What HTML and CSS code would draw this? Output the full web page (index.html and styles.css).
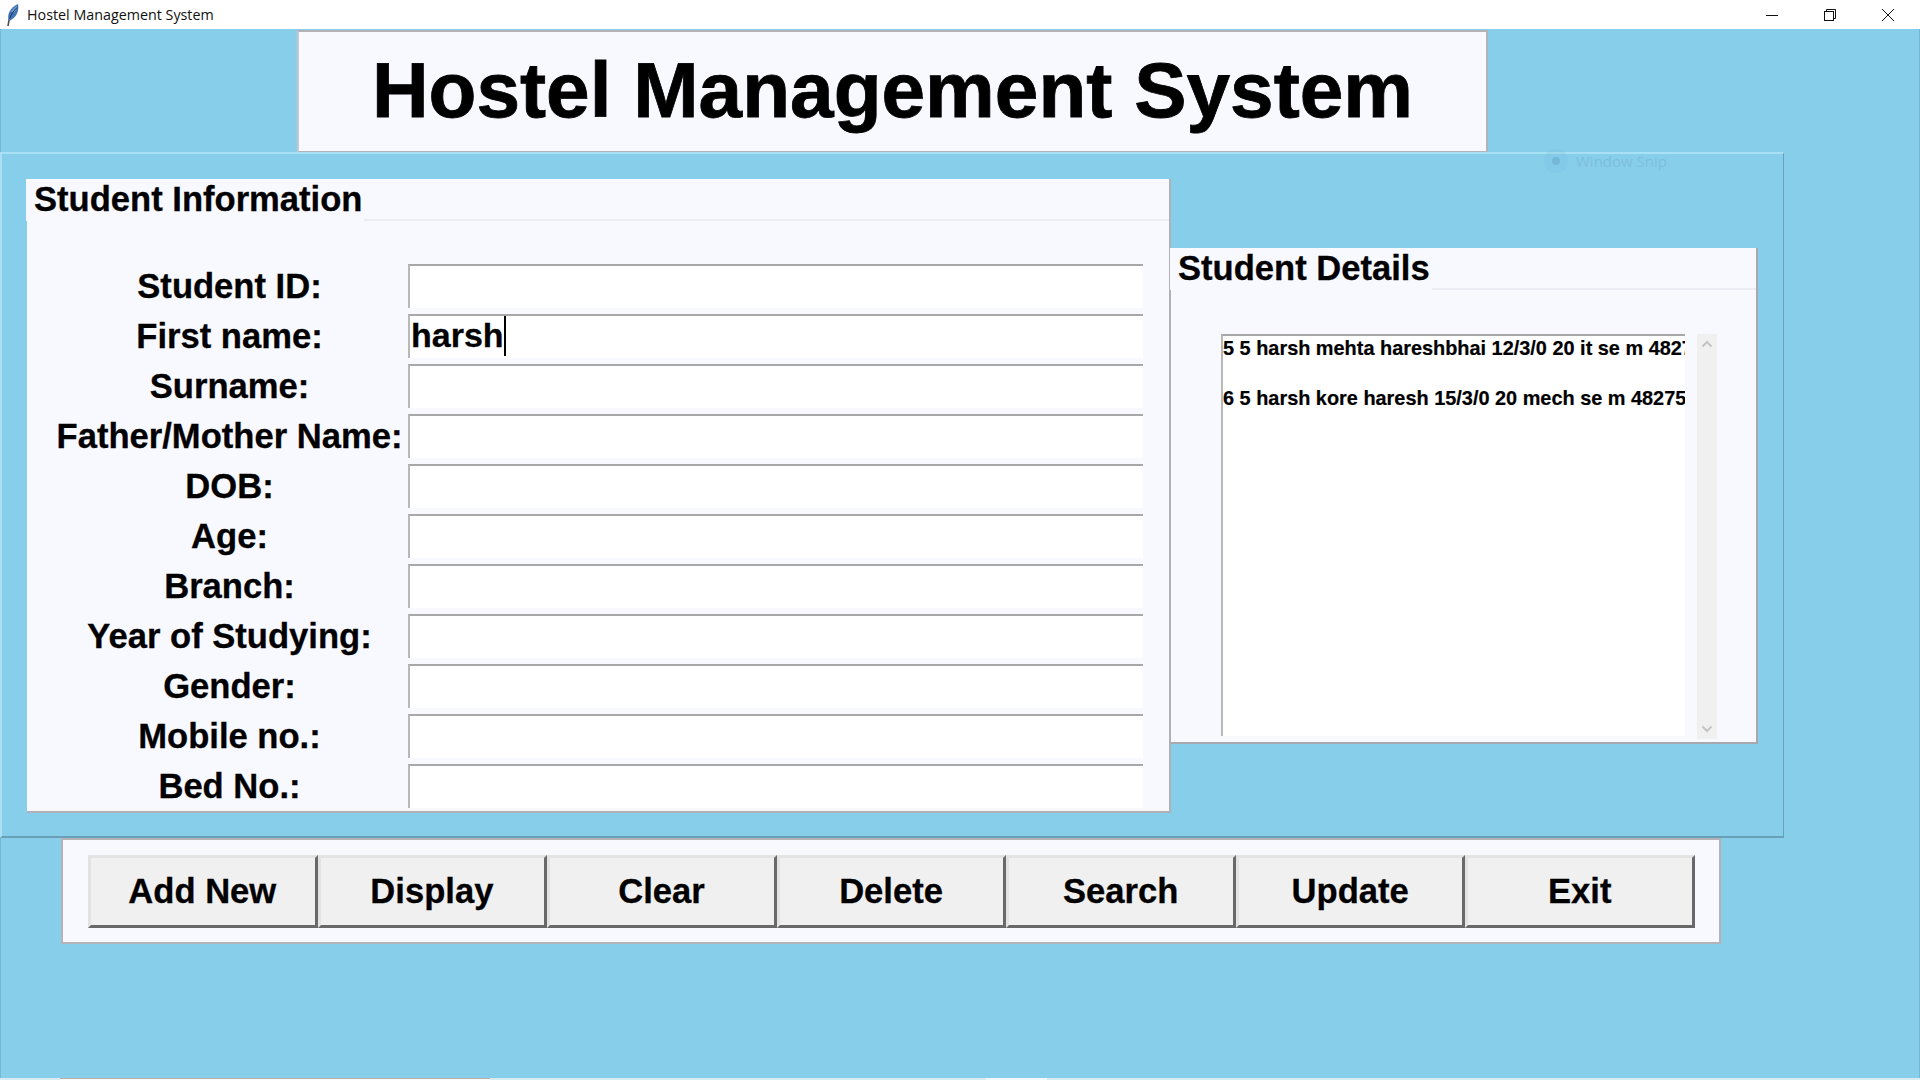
FILE: index.html
```html
<!DOCTYPE html>
<html lang="en">
<head>
    <meta charset="UTF-8">
    <title>Hostel Management System</title>
    <link rel="stylesheet" href="styles.css">
</head>
<body>
    <div class="titlebar">
        <svg class="app-icon" width="15" height="24" viewBox="0 0 15 24">
            <path d="M3 23 C3.5 19 4 17 5 14" stroke="#4a4a4a" stroke-width="1.6" fill="none"/>
            <path d="M3.6 17 C2 11 5 5 13 1 C14.5 8 11 15 5 17.5 Z" fill="#3f74b4"/>
            <path d="M6 9 C7.5 6.5 9.5 4.5 12 3 C12 5 11 7 9.5 9 Z" fill="#7da6d6"/>
            <path d="M4.6 15.5 C6 11.5 8.5 8 12 4.5" stroke="#1d2f52" stroke-width="1" fill="none"/>
        </svg>
        <span class="app-name">Hostel Management System</span>
        <div class="win-controls">
            <svg width="14" height="14" viewBox="0 0 14 14"><path d="M1 7.5H13" stroke="#111" stroke-width="1"/></svg>
            <svg width="14" height="14" viewBox="0 0 14 14" fill="none" stroke="#111"><rect x="1.5" y="3.5" width="9" height="9"/><path d="M3.5 3.5V1.5H12.5V10.5H10.5"/></svg>
            <svg width="14" height="14" viewBox="0 0 14 14"><path d="M1 1L13 13M13 1L1 13" stroke="#111" stroke-width="1"/></svg>
        </div>
    </div>

    <div class="window">
        <div class="heading">Hostel Management System</div>

        <div class="main-frame">
            <section class="info-frame">
                <div class="frame-title"><span>Student Information</span></div>
                <form class="student-form">
                    <label>Student ID:</label><div class="entry"></div>
                    <label>First name:</label><div class="entry">harsh<i class="caret"></i></div>
                    <label>Surname:</label><div class="entry"></div>
                    <label>Father/Mother Name:</label><div class="entry"></div>
                    <label>DOB:</label><div class="entry"></div>
                    <label>Age:</label><div class="entry"></div>
                    <label>Branch:</label><div class="entry"></div>
                    <label>Year of Studying:</label><div class="entry"></div>
                    <label>Gender:</label><div class="entry"></div>
                    <label>Mobile no.:</label><div class="entry"></div>
                    <label>Bed No.:</label><div class="entry"></div>
                </form>
            </section>

            <section class="details-frame">
                <div class="frame-title"><span>Student Details</span></div>
                <div class="list-wrap">
                    <div class="listbox">
                        <div class="list-row">5 5 harsh mehta hareshbhai 12/3/0 20 it se m 48275</div>
                        <div class="list-row">6 5 harsh kore haresh 15/3/0 20 mech se m 48275</div>
                    </div>
                    <div class="scrollbar">
                        <svg width="12" height="8" viewBox="0 0 12 8"><path d="M1.5 6.5L6 2L10.5 6.5" stroke="#c4c4c4" stroke-width="2" fill="none"/></svg>
                        <svg width="12" height="8" viewBox="0 0 12 8"><path d="M1.5 1.5L6 6L10.5 1.5" stroke="#c4c4c4" stroke-width="2" fill="none"/></svg>
                    </div>
                </div>
            </section>

            <div class="snip-ghost"><span class="snip-dot"></span><span>Window Snip</span></div>
        </div>

        <div class="button-bar">
            <button type="button">Add New</button>
            <button type="button">Display</button>
            <button type="button">Clear</button>
            <button type="button">Delete</button>
            <button type="button">Search</button>
            <button type="button">Update</button>
            <button type="button">Exit</button>
        </div>
    </div>

    <div class="bottom-strip"><span class="strip-tab"></span><span class="strip-light"></span></div>
</body>
</html>
```

FILE: styles.css
```css
* {
    box-sizing: border-box;
}
html, body {
    margin: 0;
    height: 100%;
    overflow: hidden;
}
body {
    display: flex;
    flex-direction: column;
    height: 1080px;
    background: #87ceeb;
    font-family: "Liberation Sans", Arial, sans-serif;
    color: #000;
}

/* title bar */
.titlebar {
    display: flex;
    align-items: center;
    height: 29px;
    background: #fff;
    padding-left: 5px;
}
.app-icon {
    flex: none;
}
.app-name {
    margin-left: 7px;
    font-family: "Open Sans", sans-serif;
    font-size: 14.3px;
    color: #111;
}
.win-controls {
    margin-left: auto;
    display: flex;
    gap: 44px;
    padding-right: 25px;
}

.window {
    flex: 1;
    border-left: 1px solid #76b8d4;
    border-right: 1px solid #76b8d4;
}

/* heading */
.heading {
    width: 1191px;
    height: 123px;
    margin-left: 296px;
    margin-top: 1px;
    background: #f8f8ff;
    border: 2px solid #b4b4b8;
    border-left-color: #c8c8cc;
    font-size: 78.4px;
    font-weight: bold;
    line-height: 116px;
    text-align: center;
    -webkit-text-stroke: 0.8px #000;
}

/* main frame */
.main-frame {
    position: relative;
    display: flex;
    align-items: flex-start;
    width: 1784px;
    height: 686px;
    margin-top: -1px;
    margin-left: -1px;
    padding: 25px 0 0 25px;
    border: 2px solid #a9e0f3;
    border-right-color: #6a9fb8;
    border-bottom-color: #6a9fb8;
    border-right-width: 1px;
}
.frame-title {
    height: 42px;
    margin-left: -1px;
    border-bottom: 2px solid #ecedf4;
    line-height: 40px;
    font-size: 34.6px;
    font-weight: bold;
    -webkit-text-stroke: 0.3px #000;
}
.frame-title span {
    display: inline-block;
    height: 42px;
    padding: 0 2px 0 8px;
    background: #f8f8ff;
}
.info-frame {
    width: 1144px;
    height: 634px;
    background: #f8f8ff;
    border-right: 2px solid #b0b0b8;
    border-bottom: 2px solid #b0b0b8;
}
.student-form {
    display: grid;
    grid-template-columns: 381px 735px;
    grid-auto-rows: 44px;
    row-gap: 6px;
    margin-top: 43px;
}
.student-form label {
    padding-left: 24px;
    font-size: 34.6px;
    font-weight: bold;
    line-height: 44px;
    text-align: center;
    white-space: nowrap;
    -webkit-text-stroke: 0.3px #000;
}
.entry {
    background: #fff;
    border-top: 2px solid #a8a8a8;
    border-left: 2px solid #b8b8b8;
    font-size: 34px;
    font-weight: bold;
    line-height: 38px;
    padding-left: 1px;
    -webkit-text-stroke: 0.3px #000;
}
.caret {
    display: inline-block;
    width: 2px;
    height: 40px;
    background: #000;
    vertical-align: top;
}

/* details */
.details-frame {
    width: 587px;
    height: 496px;
    margin-top: 69px;
    background: #f8f8ff;
    border-right: 2px solid #a8a8b0;
    border-bottom: 2px solid #a8a8b0;
}
.list-wrap {
    display: flex;
    align-items: flex-start;
    gap: 12px;
    padding: 44px 0 0 50px;
}
.listbox {
    width: 464px;
    height: 402px;
    overflow: hidden;
    background: #fff;
    border-top: 2px solid #a8a8a8;
    border-left: 2px solid #b8b8b8;
}
.list-row {
    height: 50px;
    line-height: 24px;
    font-size: 19.9px;
    font-weight: bold;
    white-space: nowrap;
    -webkit-text-stroke: 0.2px #000;
}
.scrollbar {
    display: flex;
    flex-direction: column;
    justify-content: space-between;
    align-items: center;
    width: 20px;
    height: 405px;
    padding: 6px 0;
    background: #f0f0f0;
}

/* left over from the snipping tool */
.snip-ghost {
    position: absolute;
    left: 1542px;
    top: -2px;
    height: 21px;
    display: flex;
    align-items: center;
    gap: 16px;
    padding-bottom: 3px;
    font-family: "Open Sans", sans-serif;
    font-size: 15px;
    color: #7ebfdb;
}
.snip-dot {
    width: 8px;
    height: 8px;
    border-radius: 50%;
    margin-left: 8px;
    background: #74b8d6;
    box-shadow: 0 0 0 8px rgba(116, 184, 214, 0.15);
}

/* buttons */
.button-bar {
    display: flex;
    width: 1660px;
    height: 106px;
    margin-left: 60px;
    padding: 15px 24px 0 25px;
    background: #f8f8ff;
    border: 2px solid #b4b4b8;
}
.button-bar button {
    width: 230.1px;
    height: 73px;
    background: #f0f0f0;
    border: 3px solid #e3e3e3;
    border-right-color: #696969;
    border-bottom-color: #696969;
    font-family: inherit;
    font-size: 34.6px;
    font-weight: bold;
    color: #000;
    padding: 0 1px 0 0;
    -webkit-text-stroke: 0.3px #000;
}

.bottom-strip {
    display: flex;
    flex: none;
    height: 2px;
    background: #d8ecf2;
}
.strip-tab {
    width: 430px;
    margin-left: 60px;
    background: #fbfbfb;
    border-top: 1px solid #b8b0a8;
}
.strip-light {
    width: 61px;
    margin-left: 496px;
    background: #f4f8fb;
}
```
